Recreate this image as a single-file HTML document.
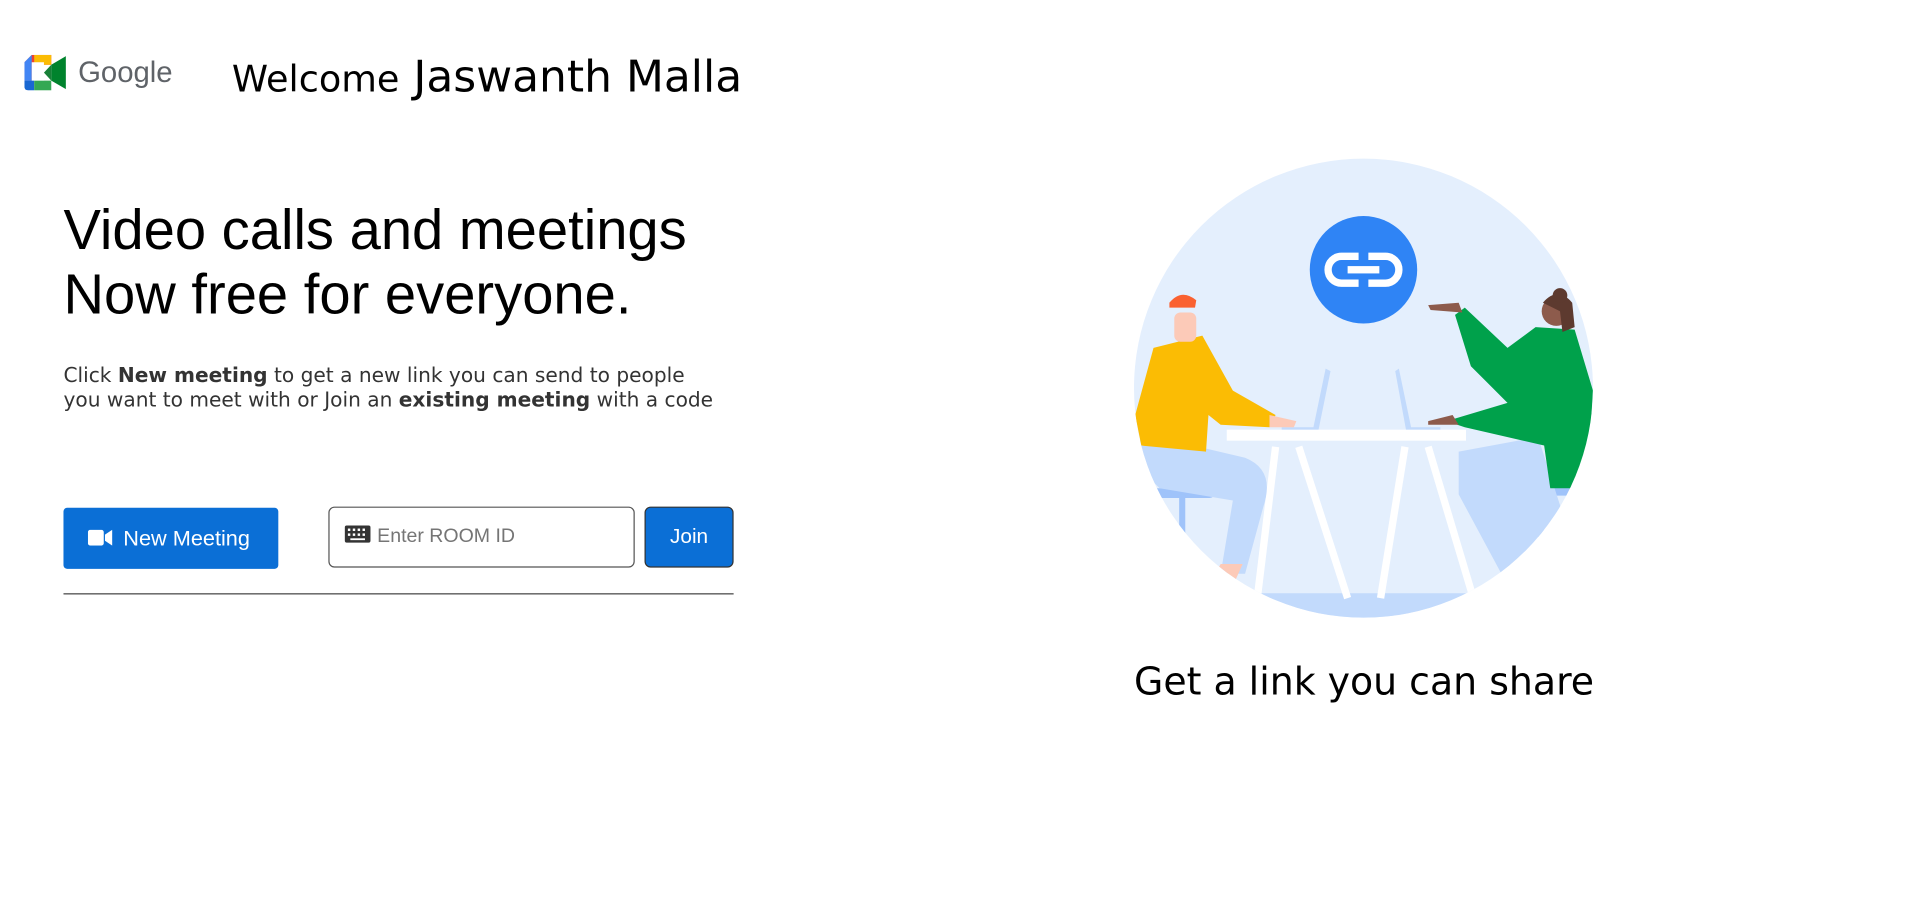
<!DOCTYPE html>
<html><head><meta charset="utf-8"><style>
html,body{margin:0;padding:0;background:#fff;width:1914px;height:897px;overflow:hidden}
#w{position:absolute;left:0;top:0;width:1568px;height:735px;transform:scale(1.22066);transform-origin:0 0}
.a{position:absolute;white-space:nowrap}
</style></head><body><div id="w">
<svg class="a" style="left:20px;top:45px" width="34" height="29" viewBox="0 0 34 29">
<path d="M6 0H22V8H8V21H0V6Z" fill="#ea4335"/>
<path d="M0 6L6 0V21H0Z" fill="#4285f4"/>
<path d="M8 0H22V8H8Z" fill="#fbbc04"/>
<path d="M0 21H8V29H3Q0 29 0 26Z" fill="#1967d2"/>
<path d="M8 21H22V29H8Z" fill="#34a853"/>
<path d="M22 8L34 1V28L22 21Z" fill="#00832d"/>
<path d="M22 8V21L16 14.5Z" fill="#188038"/>
<rect x="6" y="6" width="10" height="15" fill="#fff"/>
</svg>
<div class="a" style="left:64px;top:46px;font:24px 'Liberation Sans',sans-serif;color:#5f6368">Google</div>
<div class="a" style="left:190px;top:43px;font:36px 'DejaVu Sans',sans-serif;color:#000"><span style="font-size:30px">Welcome</span> Jaswanth Malla</div>
<div class="a" style="left:52px;top:162px;font:46px/53px 'Liberation Sans',sans-serif;color:#000">Video calls and meetings<br>Now free for everyone.</div>
<div class="a" style="left:52px;top:298px;font:16.5px/20px 'DejaVu Sans',sans-serif;color:#333">Click <b>New meeting</b> to get a new link you can send to people<br>you want to meet with or Join an <b>existing meeting</b> with a code</div>
<div class="a" style="left:52px;top:416px;width:176px;height:50px;background:#0b6fd6;border-radius:3px;color:#fff;font:17.8px 'Liberation Sans',sans-serif;line-height:50px">
<svg style="position:absolute;left:20px;top:18px" width="20" height="13" viewBox="0 0 20 13"><rect x="0" y="0" width="13" height="13" rx="2" fill="#fff"/><path d="M14 4L20 0V13L14 9Z" fill="#fff"/></svg>
<span style="position:absolute;left:49px">New Meeting</span></div>
<div class="a" style="left:269px;top:415px;width:249px;height:48px;border:1px solid #555;border-radius:5px;font:16px 'Liberation Sans',sans-serif;color:#757575;line-height:48px">
<svg style="position:absolute;left:12px;top:14px" width="22" height="15" viewBox="0 0 22 15"><rect x="0.5" y="0.5" width="21" height="14" rx="1.5" fill="#333"/><g fill="#fff"><rect x="3" y="3" width="2" height="2"/><rect x="7" y="3" width="2" height="2"/><rect x="11" y="3" width="2" height="2"/><rect x="15" y="3" width="2" height="2"/><rect x="3" y="7" width="2" height="2"/><rect x="7" y="7" width="2" height="2"/><rect x="11" y="7" width="2" height="2"/><rect x="15" y="7" width="2" height="2"/><rect x="5" y="11" width="12" height="1.5"/></g></svg>
<span style="position:absolute;left:39px">Enter ROOM ID</span></div>
<div class="a" style="left:528px;top:415px;width:71px;height:48px;background:#0b6fd6;border:1px solid #333;border-radius:5px;color:#fff;font:17px 'Liberation Sans',sans-serif;line-height:48px;text-align:center">Join</div>
<div class="a" style="left:52px;top:486px;width:549px;height:1px;background:#444"></div>

<svg class="a" style="left:900px;top:110px" width="440" height="420" viewBox="900 110 440 420">
<defs><clipPath id="c"><circle cx="1117" cy="318" r="188"/></clipPath></defs>
<g clip-path="url(#c)">
<rect x="900" y="110" width="440" height="420" fill="#e4effd"/>
<rect x="900" y="486" width="440" height="40" fill="#c2dafc"/>
<rect x="940" y="400" width="55" height="8" rx="4" fill="#9fc3fa"/>
<rect x="966" y="405" width="5" height="60" fill="#9fc3fa"/>
<rect x="1238" y="398" width="60" height="8" rx="4" fill="#9fc3fa"/>
<rect x="1260" y="403" width="5" height="60" fill="#9fc3fa"/>
<path d="M1086 302L1076 350H1050V353H1080L1090 304Z" fill="#c2dafc"/>
<path d="M1146 302L1156 350H1180V353H1152L1143 304Z" fill="#c2dafc"/>
<rect x="1005" y="352" width="196" height="9" fill="#fff"/>
<g stroke="#fff" stroke-width="6"><line x1="1045" y1="366" x2="1030" y2="490"/><line x1="1064" y1="366" x2="1104" y2="490"/><line x1="1151" y1="366" x2="1131" y2="490"/><line x1="1170" y1="366" x2="1207" y2="490"/></g>
<path d="M935 355L1020 375Q1045 385 1035 415L1020 470H1000L1010 410L950 400L930 380Z" fill="#c2dafc"/>
<path d="M1000 462L1018 462L1010 480H990Z" fill="#fccab8"/>
<path d="M945 285L985 275L1010 320L1045 340L1040 350L1000 348L990 340L988 370L935 365L930 340Z" fill="#fbbc04"/>
<path d="M1040 340L1062 345L1060 350L1040 350Z" fill="#fccab8"/>
<rect x="962" y="256" width="18" height="24" rx="5" fill="#fccab8"/>
<path d="M958 248Q968 236 980 246L979 252H958Z" fill="#fa6131"/>
<path d="M1195 370L1260 358L1280 420L1250 470H1230L1195 405Z" fill="#c2dafc"/>
<path d="M1258 268L1290 270L1305 320L1300 400H1270L1265 365L1200 350L1185 345L1235 330L1205 300L1192 258L1200 252L1235 285Z" fill="#00a14b"/>
<path d="M1170 250L1195 248L1198 256L1172 254Z" fill="#8d5b4c"/>
<path d="M1170 345L1190 340L1195 348L1170 348Z" fill="#8d5b4c"/>
<circle cx="1275" cy="255" r="12" fill="#8d5b4c"/>
<path d="M1264 248Q1276 234 1288 248L1290 268L1280 272L1278 255Z" fill="#5d3a2f"/>
<circle cx="1278" cy="242" r="6" fill="#5d3a2f"/>
</g>
<circle cx="1117" cy="221" r="44" fill="#2f84f5"/>
<path d="M1113 210H1099A11 11 0 0 0 1099 232H1113M1121 210H1135A11 11 0 0 1 1135 232H1121" fill="none" stroke="#fff" stroke-width="6"/>
<rect x="1104" y="218" width="26" height="6" fill="#fff"/>
</svg>
<div class="a" style="left:929px;top:541px;font:31px 'DejaVu Sans',sans-serif;color:#000">Get a link you can share</div>
</div></body></html>
